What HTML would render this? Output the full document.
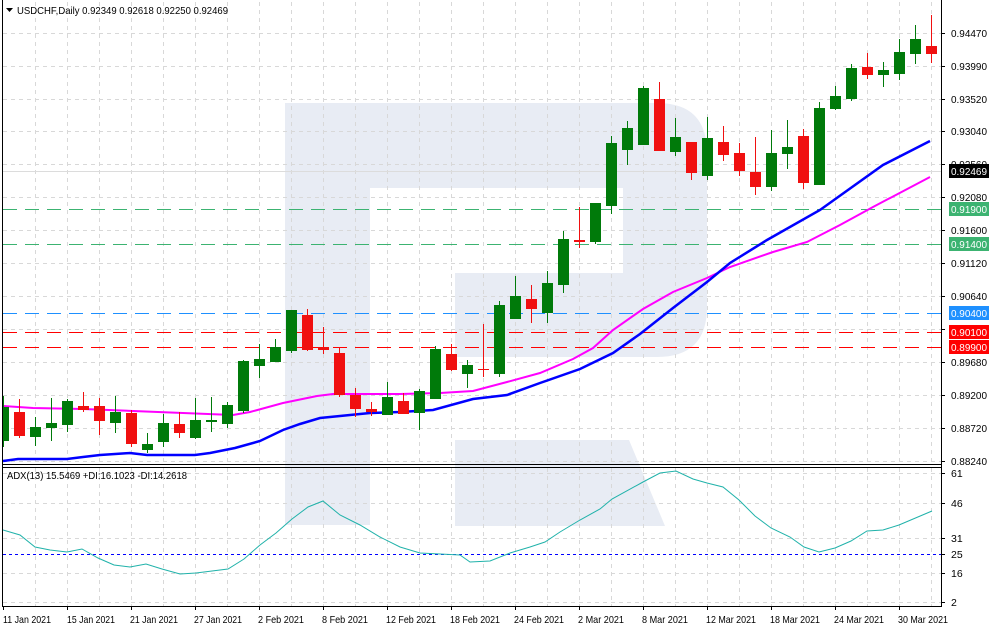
<!DOCTYPE html>
<html><head><meta charset="utf-8"><style>
html,body{margin:0;padding:0;background:#fff;}
svg{display:block;font-family:"Liberation Sans",sans-serif;font-size:10.5px;}
</style></head><body>
<svg width="993" height="630" viewBox="0 0 993 630" xmlns="http://www.w3.org/2000/svg">
<defs>
<clipPath id="mc"><rect x="3" y="1" width="938" height="463"/></clipPath>
<clipPath id="ic"><rect x="3" y="468" width="938" height="138"/></clipPath>
</defs>
<rect width="993" height="630" fill="#fff"/>
<g fill="#e8ecf4">
<path d="M285 103 H657 Q707 103 707 153 V307 Q707 357 657 357 H455 V273 H623 V188 H370 V525 H285 Z"/>
<polygon points="455,440 629,440 665,526 455,526"/>
</g>
<g stroke="#d8d8d8" stroke-dasharray="4,4" stroke-width="1">
<path d="M35.5 2V464M67.5 2V464M99.5 2V464M131.5 2V464M163.5 2V464M195.5 2V464M227.5 2V464M259.5 2V464M291.5 2V464M323.5 2V464M355.5 2V464M387.5 2V464M419.5 2V464M451.5 2V464M483.5 2V464M515.5 2V464M547.5 2V464M579.5 2V464M611.5 2V464M643.5 2V464M675.5 2V464M707.5 2V464M739.5 2V464M771.5 2V464M803.5 2V464M835.5 2V464M867.5 2V464M899.5 2V464M931.5 2V464"/>
<path d="M35.5 468V606M67.5 468V606M99.5 468V606M131.5 468V606M163.5 468V606M195.5 468V606M227.5 468V606M259.5 468V606M291.5 468V606M323.5 468V606M355.5 468V606M387.5 468V606M419.5 468V606M451.5 468V606M483.5 468V606M515.5 468V606M547.5 468V606M579.5 468V606M611.5 468V606M643.5 468V606M675.5 468V606M707.5 468V606M739.5 468V606M771.5 468V606M803.5 468V606M835.5 468V606M867.5 468V606M899.5 468V606M931.5 468V606"/>
<path d="M3 33.5H941M3 66.5H941M3 99.5H941M3 131.5H941M3 164.5H941M3 197.5H941M3 230.5H941M3 263.5H941M3 296.5H941M3 329.5H941M3 362.5H941M3 395.5H941M3 428.5H941M3 461.5H941"/>
<path d="M3 473.5H941M3 503.5H941M3 538.5H941M3 573.5H941M3 602.5H941"/>
</g>
<line x1="3" y1="171.5" x2="941" y2="171.5" stroke="#dcdcdc"/>
<g stroke-dasharray="14,8" stroke-width="1">
<line x1="3" y1="209.5" x2="941" y2="209.5" stroke="#3cb371"/>
<line x1="3" y1="244.5" x2="941" y2="244.5" stroke="#3cb371"/>
<line x1="3" y1="313.5" x2="941" y2="313.5" stroke="#1e90ff"/>
<line x1="3" y1="332.5" x2="941" y2="332.5" stroke="#ff0000"/>
<line x1="3" y1="347.5" x2="941" y2="347.5" stroke="#ff0000"/>
</g>
<g clip-path="url(#mc)" fill="none">
<polyline stroke="#ff00ff" stroke-width="2" points="3,406 33,408 83,409 133,411 233,415 250,412 283,403 317,396 333,394 400,394 440,393 473,391 507,382 540,373 573,359 593,348 613,330 643,309 673,292 707,278 730,267 773,252 807,242 840,225 873,207 930,177"/>
<polyline stroke="#0000ff" stroke-width="2.5" points="3,461 18,459 67,459 83,457 100,455 115,454 130,453 147,455 195,455 210,453 235,448 260,441 283,430 300,424 320,418 340,416 370,413 400,412 433,410 473,399 507,395 540,383 580,369 613,353 640,334 673,308 707,282 730,263 767,240 820,210 883,165 930,141"/>
</g>
<g clip-path="url(#mc)">
<path stroke="#007a0a" fill="none" d="M3.5 396V447M35.5 417V446M51.5 398V441M67.5 399V432M115.5 396V433M147.5 433V453M163.5 414V447M195.5 398V439M211.5 397V432M227.5 402V428M243.5 360V413M259.5 344V378M275.5 339V362M291.5 310V353M387.5 382V415M419.5 389V430M435.5 346V399M467.5 360V388M499.5 301V377M515.5 276V319M547.5 271V323M563.5 231V293M595.5 203V244M611.5 136V214M627.5 121V165M643.5 86V145M675.5 118V156M707.5 117V180M771.5 130V191M787.5 120V169M819.5 102V185M835.5 86V110M851.5 64V101M883.5 62V87M899.5 39V80M915.5 25V64"/>
<g fill="#007a0a">
<rect x="-2" y="407" width="11" height="34"/><rect x="30" y="427" width="11" height="10"/><rect x="46" y="423" width="11" height="5"/><rect x="62" y="401" width="11" height="24"/><rect x="110" y="412" width="11" height="11"/><rect x="142" y="444" width="11" height="6"/><rect x="158" y="423" width="11" height="19"/><rect x="190" y="420" width="11" height="18"/><rect x="206" y="420" width="11" height="2"/><rect x="222" y="405" width="11" height="19"/><rect x="238" y="361" width="11" height="50"/><rect x="254" y="359" width="11" height="7"/><rect x="270" y="347" width="11" height="15"/><rect x="286" y="310" width="11" height="41"/><rect x="382" y="397" width="11" height="18"/><rect x="414" y="391" width="11" height="22"/><rect x="430" y="349" width="11" height="50"/><rect x="462" y="365" width="11" height="9"/><rect x="494" y="305" width="11" height="69"/><rect x="510" y="296" width="11" height="23"/><rect x="542" y="283" width="11" height="30"/><rect x="558" y="239" width="11" height="46"/><rect x="590" y="203" width="11" height="39"/><rect x="606" y="143" width="11" height="63"/><rect x="622" y="128" width="11" height="22"/><rect x="638" y="88" width="11" height="57"/><rect x="670" y="137" width="11" height="15"/><rect x="702" y="138" width="11" height="38"/><rect x="766" y="153" width="11" height="34"/><rect x="782" y="147" width="11" height="7"/><rect x="814" y="108" width="11" height="77"/><rect x="830" y="96" width="11" height="13"/><rect x="846" y="68" width="11" height="31"/><rect x="878" y="70" width="11" height="5"/><rect x="894" y="52" width="11" height="22"/><rect x="910" y="39" width="11" height="15"/>
</g>
<path stroke="#f01010" fill="none" d="M19.5 399V438M83.5 392V412M99.5 398V435M131.5 410V447M179.5 412V438M307.5 309V351M323.5 327V354M339.5 347V397M355.5 388V417M371.5 402V416M403.5 393V414M451.5 344V371M483.5 324V377M531.5 285V323M579.5 207V248M659.5 82V151M691.5 142V180M723.5 126V161M739.5 143V176M755.5 137V195M803.5 129V189M867.5 53V79M931.5 15V63"/>
<g fill="#f01010">
<rect x="14" y="412" width="11" height="24"/><rect x="78" y="406" width="11" height="4"/><rect x="94" y="406" width="11" height="15"/><rect x="126" y="413" width="11" height="31"/><rect x="174" y="424" width="11" height="9"/><rect x="302" y="315" width="11" height="35"/><rect x="318" y="347" width="11" height="3"/><rect x="334" y="353" width="11" height="42"/><rect x="350" y="395" width="11" height="14"/><rect x="366" y="409" width="11" height="3"/><rect x="398" y="401" width="11" height="13"/><rect x="446" y="354" width="11" height="16"/><rect x="478" y="369" width="11" height="1"/><rect x="526" y="299" width="11" height="10"/><rect x="574" y="240" width="11" height="2"/><rect x="654" y="99" width="11" height="52"/><rect x="686" y="142" width="11" height="31"/><rect x="718" y="142" width="11" height="13"/><rect x="734" y="153" width="11" height="18"/><rect x="750" y="172" width="11" height="15"/><rect x="798" y="136" width="11" height="47"/><rect x="862" y="67" width="11" height="8"/><rect x="926" y="46" width="11" height="8"/>
</g>
</g>
<line x1="3" y1="554.5" x2="941" y2="554.5" stroke="#0000ff" stroke-dasharray="3,3"/>
<polyline clip-path="url(#ic)" fill="none" stroke="#20b2aa" stroke-width="1" points="3,530 20,535 35,547 50,550 67,552 82,549 98,558 114,565 130,567 146,564 162,569 180,574 196,573 212,571 228,569 244,559 260,545 276,533 292,519 308,507 323,501 340,515 360,525 380,537 400,547 420,553 440,554 460,555 470,562 490,561 510,553 530,547 545,542 560,532 580,520 600,509 612,499 643,482 660,473 676,471 693,479 707,483 723,487 739,500 755,516 771,528 790,537 804,547 819,552 835,548 851,541 867,531 883,530 899,525 932,511"/>
<g stroke="#000" stroke-width="1" fill="none">
<line x1="2.5" y1="0" x2="2.5" y2="607"/>
<line x1="941.5" y1="0" x2="941.5" y2="607"/>
<line x1="2" y1="464.5" x2="942" y2="464.5"/>
<line x1="2" y1="467.5" x2="942" y2="467.5"/>
<line x1="2" y1="606.5" x2="942" y2="606.5"/>
<path d="M941 33.5h4M941 66.5h4M941 99.5h4M941 131.5h4M941 164.5h4M941 197.5h4M941 230.5h4M941 263.5h4M941 296.5h4M941 329.5h4M941 362.5h4M941 395.5h4M941 428.5h4M941 461.5h4M941 473.5h4M941 503.5h4M941 538.5h4M941 554.5h4M941 573.5h4M941 602.5h4"/>
<path d="M3.5 606v4M67.5 606v4M131.5 606v4M195.5 606v4M259.5 606v4M323.5 606v4M387.5 606v4M451.5 606v4M515.5 606v4M579.5 606v4M643.5 606v4M707.5 606v4M771.5 606v4M835.5 606v4M899.5 606v4"/>
</g>
<path d="M6 8h7l-3.5 4z" fill="#000"/>
<text x="17" y="14" fill="#000" textLength="211" lengthAdjust="spacingAndGlyphs">USDCHF,Daily  0.92349 0.92618 0.92250 0.92469</text>
<text x="7" y="479" fill="#000" textLength="180" lengthAdjust="spacingAndGlyphs">ADX(13) 15.5469 +DI:16.1023 -DI:14.2618</text>
<g fill="#000">
<text x="951" y="37" textLength="36" lengthAdjust="spacingAndGlyphs">0.94470</text><text x="951" y="70" textLength="36" lengthAdjust="spacingAndGlyphs">0.93990</text><text x="951" y="103" textLength="36" lengthAdjust="spacingAndGlyphs">0.93520</text><text x="951" y="135" textLength="36" lengthAdjust="spacingAndGlyphs">0.93040</text><text x="951" y="168" textLength="36" lengthAdjust="spacingAndGlyphs">0.92560</text><text x="951" y="201" textLength="36" lengthAdjust="spacingAndGlyphs">0.92080</text><text x="951" y="234" textLength="36" lengthAdjust="spacingAndGlyphs">0.91600</text><text x="951" y="267" textLength="36" lengthAdjust="spacingAndGlyphs">0.91120</text><text x="951" y="300" textLength="36" lengthAdjust="spacingAndGlyphs">0.90640</text><text x="951" y="366" textLength="36" lengthAdjust="spacingAndGlyphs">0.89680</text><text x="951" y="399" textLength="36" lengthAdjust="spacingAndGlyphs">0.89200</text><text x="951" y="432" textLength="36" lengthAdjust="spacingAndGlyphs">0.88720</text><text x="951" y="465" textLength="36" lengthAdjust="spacingAndGlyphs">0.88240</text>
<text x="951" y="477">61</text><text x="951" y="507">46</text><text x="951" y="542">31</text><text x="951" y="558">25</text><text x="951" y="577">16</text><text x="951" y="606">2</text>
</g>
<rect x="949" y="164" width="40" height="14" fill="#000"/><text x="951" y="175" fill="#fff" textLength="36" lengthAdjust="spacingAndGlyphs">0.92469</text>
<rect x="949" y="202" width="40" height="14" fill="#3cb371"/><text x="951" y="213" fill="#fff" textLength="36" lengthAdjust="spacingAndGlyphs">0.91900</text>
<rect x="949" y="237" width="40" height="14" fill="#3cb371"/><text x="951" y="248" fill="#fff" textLength="36" lengthAdjust="spacingAndGlyphs">0.91400</text>
<rect x="949" y="306" width="40" height="14" fill="#1e90ff"/><text x="951" y="317" fill="#fff" textLength="36" lengthAdjust="spacingAndGlyphs">0.90400</text>
<rect x="949" y="325" width="40" height="14" fill="#ff0000"/><text x="951" y="336" fill="#fff" textLength="36" lengthAdjust="spacingAndGlyphs">0.90100</text>
<rect x="949" y="340" width="40" height="14" fill="#ff0000"/><text x="951" y="351" fill="#fff" textLength="36" lengthAdjust="spacingAndGlyphs">0.89900</text>
<g fill="#000">
<text x="3" y="623" textLength="48" lengthAdjust="spacingAndGlyphs">11 Jan 2021</text><text x="67" y="623" textLength="48" lengthAdjust="spacingAndGlyphs">15 Jan 2021</text><text x="130" y="623" textLength="48" lengthAdjust="spacingAndGlyphs">21 Jan 2021</text><text x="194" y="623" textLength="48" lengthAdjust="spacingAndGlyphs">27 Jan 2021</text><text x="258" y="623" textLength="46" lengthAdjust="spacingAndGlyphs">2 Feb 2021</text><text x="322" y="623" textLength="46" lengthAdjust="spacingAndGlyphs">8 Feb 2021</text><text x="386" y="623" textLength="50" lengthAdjust="spacingAndGlyphs">12 Feb 2021</text><text x="450" y="623" textLength="50" lengthAdjust="spacingAndGlyphs">18 Feb 2021</text><text x="514" y="623" textLength="50" lengthAdjust="spacingAndGlyphs">24 Feb 2021</text><text x="578" y="623" textLength="46" lengthAdjust="spacingAndGlyphs">2 Mar 2021</text><text x="642" y="623" textLength="46" lengthAdjust="spacingAndGlyphs">8 Mar 2021</text><text x="706" y="623" textLength="50" lengthAdjust="spacingAndGlyphs">12 Mar 2021</text><text x="770" y="623" textLength="50" lengthAdjust="spacingAndGlyphs">18 Mar 2021</text><text x="834" y="623" textLength="50" lengthAdjust="spacingAndGlyphs">24 Mar 2021</text><text x="898" y="623" textLength="50" lengthAdjust="spacingAndGlyphs">30 Mar 2021</text>
</g>
</svg>
</body></html>
